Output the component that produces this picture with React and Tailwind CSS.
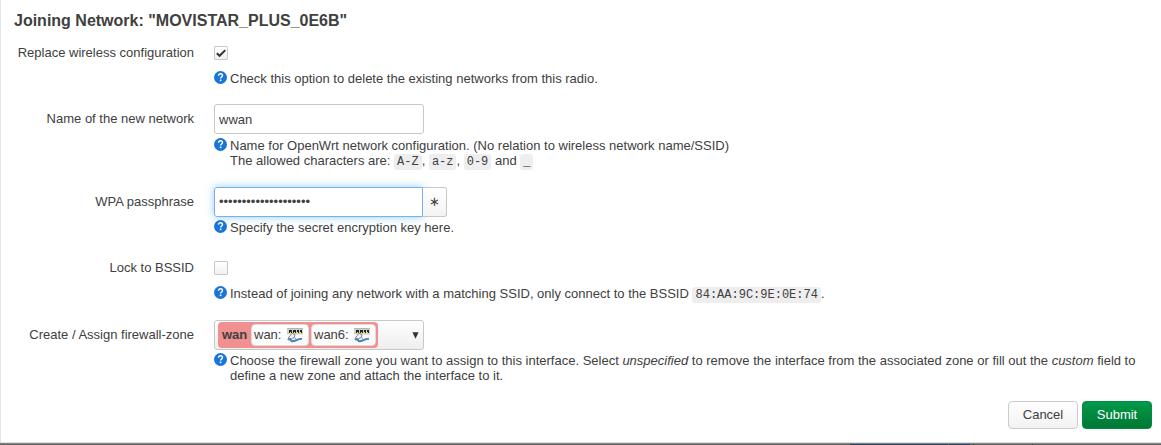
import React from "react";

function HelpIcon() {
  return (
    <svg className="h-[13px] w-[13px] shrink-0" viewBox="0 0 13 13">
      <circle cx="6.5" cy="6.5" r="6.5" fill="#1976d8" />
      <path d="M4.5 4.8C4.5 3.4 5.4 2.8 6.5 2.8S8.5 3.5 8.5 4.6C8.5 5.9 6.6 6 6.6 7.6" fill="none" stroke="#fff" strokeWidth="1.4" />
      <rect x="5.8" y="8.6" width="1.6" height="1.5" fill="#fff" />
    </svg>
  );
}

function Help({ className = "", children }) {
  return (
    <div className={`flex gap-[3px] ${className}`}>
      <HelpIcon />
      <div>{children}</div>
    </div>
  );
}

function Row({ label, className = "", labelClass = "", children }) {
  return (
    <div className={`flex ${className}`}>
      <div className={`w-[193px] shrink-0 text-right ${labelClass}`}>{label}</div>
      <div className="ml-5 min-w-0 flex-1 pr-3">{children}</div>
    </div>
  );
}

function Code({ children }) {
  return (
    <code className="rounded-[3px] bg-[#eee] px-[3px] py-px text-[12px] leading-[14px] [font-family:'Liberation_Mono',monospace]">
      {children}
    </code>
  );
}

function Checkbox({ checked }) {
  return (
    <div className="flex h-[14px] w-[14px] items-center justify-center rounded-[1px] border border-[#c8c8c8] bg-linear-to-b from-white to-[#f1f1f1]">
      {checked && (
        <svg className="h-3 w-3 shrink-0" viewBox="0 0 12 12">
          <path d="M1.8 6.2L4.6 8.8L10.3 3.1" fill="none" stroke="#333" strokeWidth="2" />
        </svg>
      )}
    </div>
  );
}

function BridgeIcon() {
  return (
    <svg className="h-4 w-4 shrink-0" viewBox="0 0 16 16">
      <rect x="0" y="1" width="16" height="6.5" fill="#cfd0c9" />
      <path d="M0.5 1.5H15.5" fill="none" stroke="#b5b5b0" />
      <path d="M2 3h3v3H2zM6 3h3v3H6zM10 3h2v3h-2zM13 3h2v3h-2z" fill="#24261f" />
      <path d="M3 5h1v1H3zM7 5h1v1H7zM10 5h1v1h-1zM13 5h1v1h-1z" fill="#f4df4a" />
      <path d="M5.2 6.4L8 7.8L7.3 10.3L4.5 11.8L1.2 11L3 8.8Z" fill="#f2f2ef" stroke="#858580" strokeWidth="1" />
      <path d="M0.8 12.8C2.2 11.8 4.3 12.5 4.8 14.2C8.5 14.7 9.5 11.8 15 11.8" fill="none" stroke="#4c80bd" strokeWidth="2" />
      <path d="M5.3 11.2L8 10.5L8.7 12" fill="none" stroke="#8baed4" />
    </svg>
  );
}

function Iface({ name, className }) {
  return (
    <span className={`flex h-[22px] items-center justify-between rounded-[4px] border border-[#ddd] bg-linear-to-b from-white to-[#fafafa] pr-[5px] pl-[2px] ${className}`}>
      <span className="-mt-px">{name}</span>
      <BridgeIcon />
    </span>
  );
}

export default function App() {
  return (
    <div className="flex h-[445px] w-[1161px] flex-col overflow-hidden bg-white text-[13px] leading-[15px] text-[#404040] [font-family:'Liberation_Sans',Arial,sans-serif]">
      <main className="h-[442px] shrink-0 border-l border-[#e4e4e4]">
        <h4 className="h-[45px] pt-3 pl-[13px] text-[16px] leading-[18px] font-bold">
          Joining Network: "MOVISTAR_PLUS_0E6B"
        </h4>
        <Row className="h-[59px]" label="Replace wireless configuration">
          <div className="pt-px"><Checkbox checked /></div>
          <Help className="mt-[11px]">Check this option to delete the existing networks from this radio.</Help>
        </Row>
        <Row className="h-[83px]" labelClass="pt-[7px]" label="Name of the new network">
          <div className="flex h-[30px] w-[210px] items-center rounded-[3px] border border-[#c8c8c8] px-1">wwan</div>
          <Help className="mt-1">
            Name for OpenWrt network configuration. (No relation to wireless network name/SSID)<br />
            The allowed characters are: <Code>A-Z</Code>, <Code>a-z</Code>, <Code>0-9</Code> and <Code>_</Code>
          </Help>
        </Row>
        <Row className="h-[73px]" labelClass="pt-[7px]" label="WPA passphrase">
          <div className="flex h-[30px]">
            <input
              type="password"
              readOnly
              value="12345678901234567890"
              className="w-[209px] rounded-l-[3px] border border-[#73b3eb] px-1 pb-[2px] shadow-[0_0_8px_rgba(82,168,236,0.6)] outline-none"
            />
            <div className="flex w-6 items-center justify-center rounded-r-[3px] border border-l-0 border-[#c8c8c8] bg-linear-to-b from-white to-[#f3f3f3] pb-[2px]">∗</div>
          </div>
          <Help className="mt-[3px]">Specify the secret encryption key here.</Help>
        </Row>
        <Row className="h-[60px]" label="Lock to BSSID">
          <div className="pt-px"><Checkbox /></div>
          <Help className="mt-[11px]">
            Instead of joining any network with a matching SSID, only connect to the BSSID <Code>84:AA:9C:9E:0E:74</Code>.
          </Help>
        </Row>
        <Row className="h-[81px]" labelClass="pt-[7px]" label="Create / Assign firewall-zone">
          <div className="flex h-[30px] w-[210px] items-center justify-between rounded-[3px] border border-[#c8c8c8] bg-linear-to-b from-white to-[#eee] pr-1 pl-[3px]">
            <span className="flex h-[26px] w-[160px] items-center rounded-[4px] bg-[#f09090] pl-1">
              <strong className="-mt-px w-[29px]">wan</strong>
              <Iface name="wan:" className="w-[58px]" />
              <Iface name="wan6:" className="ml-[2px] w-[65px]" />
            </span>
            <svg className="h-[7px] w-[7px]" viewBox="0 0 7 7"><path d="M0.4 0.3H6.6L3.5 6.8Z" fill="#333" /></svg>
          </div>
          <Help className="mt-[3px]">
            Choose the firewall zone you want to assign to this interface. Select <em>unspecified</em> to remove the interface from the associated zone or fill out the <em>custom</em> field to define a new zone and attach the interface to it.
          </Help>
        </Row>
        <div className="flex justify-end gap-1 pr-[9px]">
          <button className="h-7 w-[70px] rounded-[4px] border border-[#ccc] bg-linear-to-b from-white to-[#f2f2f2] pb-[2px]">Cancel</button>
          <button className="h-7 w-[70px] rounded-[4px] border border-[#008c40] bg-linear-to-b from-[#00994a] to-[#007834] pb-[2px] text-white">Submit</button>
        </div>
      </main>
      <div className="h-px shrink-0 bg-[#dcdcdc]" />
      <div className="flex h-[2px] shrink-0 border-t border-[#858585] bg-[#666364]">
        <div className="ml-[850px] h-px w-[98px] bg-[#293c60]" />
        <div className="ml-px h-px w-[21px] bg-[#293c60]" />
        <div className="ml-[3px] h-px w-px bg-[#244c40]" />
        <div className="ml-[58px] h-px w-px bg-[#244c40]" />
      </div>
    </div>
  );
}
